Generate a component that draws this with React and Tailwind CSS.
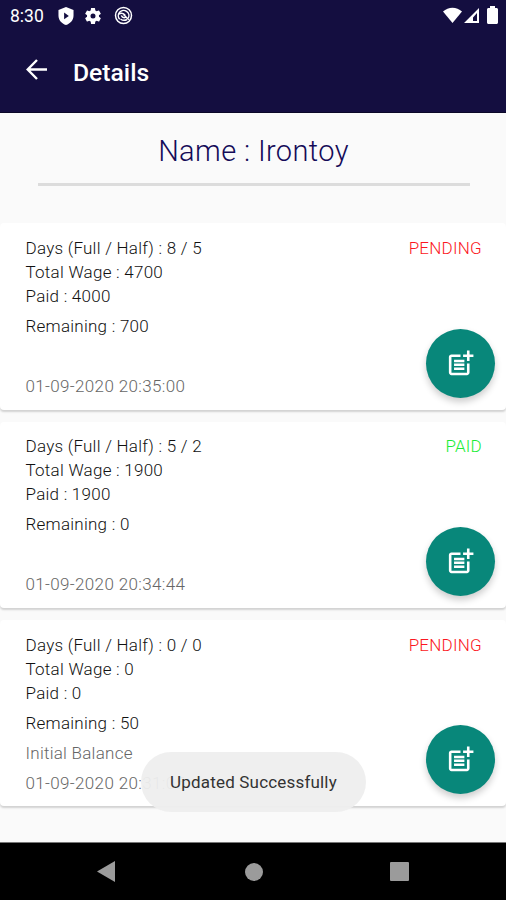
import React from 'react';

const records = [
  { days: '8 / 5', wage: '4700', paid: '4000', remaining: '700', note: '', date: '01-09-2020 20:35:00', status: 'PENDING' },
  { days: '5 / 2', wage: '1900', paid: '1900', remaining: '0', note: '', date: '01-09-2020 20:34:44', status: 'PAID' },
  { days: '0 / 0', wage: '0', paid: '0', remaining: '50', note: 'Initial Balance', date: '01-09-2020 20:31:05', status: 'PENDING' },
];

function StatusBar() {
  return (
    <div className="flex h-8 items-center pl-[10px] pr-[8px] text-white">
      <span className="w-[48px] text-[17.500px] leading-8">8:30</span>
      <svg className="mt-[-1px] h-[18px] w-[16px]" viewBox="0 0 17 17" preserveAspectRatio="none" fill="currentColor">
        <path fillRule="evenodd" d="M8.500 0 16.500 2.800V8c0 4.300-3.300 7.700-8 9C3.800 15.700.5 12.300.5 8V2.800zM6.500 5.300v6.200l5-3.100z" />
      </svg>
      <svg className="ml-[9px] size-[20px]" viewBox="0 0 24 24" fill="currentColor">
        <path d="M19.140 12.940c.040-.3.060-.610.060-.940 0-.320-.020-.640-.070-.940l2.030-1.580a.49.49 0 0 0 .120-.610l-1.920-3.320a.49.49 0 0 0-.590-.220l-2.390.960c-.5-.380-1.030-.7-1.620-.940l-.360-2.540a.48.48 0 0 0-.480-.410h-3.840c-.240 0-.430.170-.470.410l-.360 2.540c-.590.240-1.130.570-1.620.940l-2.390-.960a.48.48 0 0 0-.590.220L2.740 8.870c-.120.210-.080.470.120.610l2.030 1.580c-.050.3-.090.630-.090.940s.020.640.070.940l-2.030 1.580a.49.49 0 0 0-.120.610l1.920 3.320c.120.220.370.290.590.220l2.390-.960c.5.380 1.030.7 1.620.940l.360 2.540c.050.240.240.410.480.410h3.840c.240 0 .440-.170.470-.410l.360-2.540c.590-.240 1.130-.560 1.620-.940l2.390.960c.220.080.470 0 .590-.220l1.920-3.320a.48.48 0 0 0-.120-.610zM12 15a3 3 0 1 1 0-6 3 3 0 0 1 0 6z" />
      </svg>
      <svg className="ml-[11px] mt-[-2px] size-[19px]" viewBox="0 0 19 19" fill="none" stroke="currentColor">
        <circle cx="9.500" cy="9.500" r="8" strokeWidth="1.500" />
        <path d="M5.700 13.300A5.300 5.300 0 1 1 14.300 12.200" strokeWidth="1.500" />
        <path d="M4.700 8c2.600-1.300 5.200-.7 6.600 1.400M7.300 9.500c.8 1.900 2.400 2.500 4.400 1.900M6.500 13c2.200 1.600 4.500 1.700 6.500.5M9.500 8.500l5.300 5.300" strokeWidth="1.500" />
      </svg>
      <svg className="ml-auto mt-[-1px] h-[17px] w-[19px]" viewBox="0 0 19 17" fill="currentColor">
        <path d="M0 4.600C5.300-.5 13.700-.5 19 4.600L9.500 16z" />
      </svg>
      <svg className="mt-[-1px] ml-[1px] size-[17px]" viewBox="0 0 17 17" fill="currentColor">
        <path fillRule="evenodd" d="M16 1v15H1zM14 6l-4 4.500v3.500h4z" />
      </svg>
      <svg className="ml-[7px] mt-[-2px] h-[18px] w-[11px]" viewBox="0 0 11 18" fill="currentColor">
        <path d="M3 0h5v2h1.500c.8 0 1.500.7 1.500 1.500v13c0 .8-.7 1.500-1.500 1.500h-8C.7 18 0 17.300 0 16.500v-13C0 2.700.7 2 1.500 2H3z" />
      </svg>
    </div>
  );
}

function AddButton() {
  return (
    <button className="absolute bottom-[12px] right-[11.500px] flex size-[69px] items-center justify-center rounded-full bg-[#08877a] text-white shadow-[0_4px_7px_rgba(0,0,0,0.2)]">
      <svg className="size-[31px]" viewBox="0 0 24 24" fill="currentColor">
        <path d="M17 19.220H5V7h7V5H5c-1.100 0-2 .9-2 2v12c0 1.100.9 2 2 2h12c1.100 0 2-.9 2-2v-7h-2z" />
        <path d="M19 2h-2v3h-3v2h3v3h2V7h3V5h-3zM7 9h8v2H7zM7 12h8v2H7zM7 15h8v2H7z" />
      </svg>
    </button>
  );
}

function RecordCard({ record }) {
  return (
    <article className="relative h-[186.400px] rounded-[4px] bg-white pl-[25.500px] pr-6 pt-[12.800px] text-[17px] leading-6 tracking-[0.25px] text-[#111] shadow-[0_2px_2px_rgba(0,0,0,0.16)]">
      <div className="flex justify-between">
        <p>Days (Full / Half) : {record.days}</p>
        <p className={record.status === 'PAID' ? 'text-[#19ed35]' : 'text-[#fb1722]'}>{record.status}</p>
      </div>
      <p>Total Wage : {record.wage}</p>
      <p>Paid : {record.paid}</p>
      <p className="mt-1.5">Remaining : {record.remaining}</p>
      <p className="mt-1.5 h-6 text-[#666]">{record.note}</p>
      <p className="mt-1.5 tracking-[0.35px] text-[#666]">{record.date}</p>
      <AddButton />
    </article>
  );
}

export default function App() {
  return (
    <div className="relative flex h-[900px] w-[506px] flex-col overflow-hidden bg-[#fafafa] font-['Roboto',sans-serif] font-light">
      <header className="h-[113px] shrink-0 border-b border-[#0b0828] bg-[#140e40] font-normal">
        <StatusBar />
        <div className="flex h-20 items-center pl-[26px] text-white">
          <svg className="mt-[-5px] h-[21px] w-[22px]" viewBox="0 0 22 21" fill="none" stroke="currentColor" strokeWidth="2.400">
            <path d="M21 10.500H2M11 1 1.700 10.500 11 20" />
          </svg>
          <h1 className="ml-[25px] mt-[2px] text-[24.700px] font-medium">Details</h1>
        </div>
      </header>
      <main className="flex-1">
        <h2 className="ml-[37.500px] mr-[36.500px] h-[73px] border-b-[3px] border-[#dcdcdc] pt-[18px] text-center text-[29px] leading-10 tracking-[0.38px] text-[#140b58]">Name : Irontoy</h2>
        <div className="mt-[37.200px] flex flex-col gap-3">
          {records.map((record) => <RecordCard key={record.date} record={record} />)}
        </div>
      </main>
      <nav className="flex h-[58px] shrink-0 items-center justify-between border-t border-[#777] bg-black px-[97px] text-[#9b9b9b]">
        <svg className="h-[21px] w-[18px]" viewBox="0 0 18 21" fill="currentColor"><path d="M18 0v21L0 10.500z" /></svg>
        <span className="ml-[3px] size-[18px] rounded-full bg-current" />
        <span className="size-[19px] rounded-[1px] bg-current" />
      </nav>
      <div className="absolute left-[141px] top-[752px] flex h-[60px] w-[225px] items-center justify-center rounded-[30px] bg-[#eeeeee]/95 pt-[2px] text-[17px] font-normal tracking-[0.18px] text-[#333]">Updated Successfully</div>
    </div>
  );
}
